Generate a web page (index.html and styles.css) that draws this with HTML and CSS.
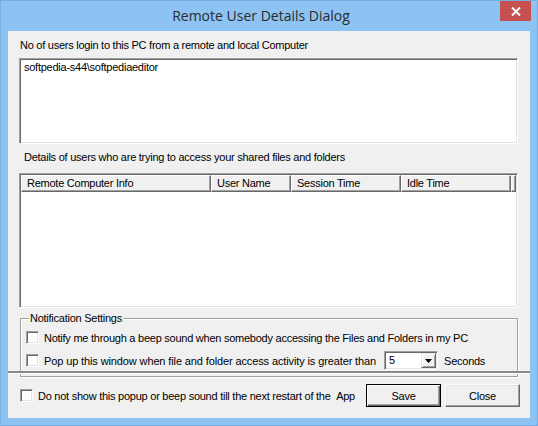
FILE: index.html
```html
<!DOCTYPE html>
<html>
<head>
<meta charset="utf-8">
<link rel="stylesheet" href="styles.css">
</head>
<body>
<div class="window">
  <div class="titlebar">
    <div></div>
    <div class="title">Remote User Details Dialog</div>
    <div class="tb-right">
      <div class="close-btn">
        <svg width="10" height="9" viewBox="0 0 10 9"><path d="M1 0.5 L9 8.5 M9 0.5 L1 8.5" stroke="#fff" stroke-width="2" fill="none"/></svg>
      </div>
    </div>
  </div>
  <div class="client">
    <div class="main">
      <div class="label l1">No of users login to this PC from a remote and local Computer</div>
      <div class="sunken textbox">
        <div class="tb-line">softpedia-s44\softpediaeditor</div>
      </div>
      <div class="label l2">Details of users who are trying to access your shared files and folders</div>
      <div class="sunken listview">
        <div class="lv-header">
          <div class="col c1">Remote Computer Info</div>
          <div class="col c2">User Name</div>
          <div class="col c3">Session Time</div>
          <div class="col c4">Idle Time</div>
          <div class="col c5"></div>
        </div>
      </div>
      <div class="group">
        <div class="legend">Notification Settings</div>
        <div class="opt">
          <span class="cb"></span>
          <span class="opt-text">Notify me through a beep sound when somebody accessing the Files and Folders in my PC</span>
        </div>
        <div class="opt">
          <span class="cb"></span>
          <span class="opt-text wide">Pop up this window when file and folder access activity is greater than</span>
          <div class="combo">
            <span class="combo-val">5</span>
            <span class="combo-btn"><svg width="7" height="4" viewBox="0 0 7 4"><path d="M0 0 H7 L3.5 4 Z" fill="#000"/></svg></span>
          </div>
          <span class="opt-text sec">Seconds</span>
        </div>
      </div>
    </div>
    <div class="footer">
      <span class="cb"></span>
      <span class="foot-text">Do not show this popup or beep sound till the next restart of the &nbsp;App</span>
      <div class="btn default">Save</div>
      <div class="btn">Close</div>
    </div>
  </div>
</div>
</body>
</html>
```
FILE: styles.css
```css
html, body {
  margin: 0;
  padding: 0;
}
body {
  width: 538px;
  height: 426px;
  overflow: hidden;
}
.window {
  width: 538px;
  height: 426px;
  box-sizing: border-box;
  background: #8cc3f3;
  box-shadow: inset 0 0 0 1px #78afe2;
  display: flex;
  flex-direction: column;
  font-family: "Liberation Sans", Arial, sans-serif;
  font-size: 11px;
  letter-spacing: -0.25px;
  color: #000;
}
.titlebar {
  height: 31px;
  display: grid;
  grid-template-columns: 1fr auto 1fr;
  flex: none;
}
.title {
  font-family: "Open Sans", "Noto Sans", sans-serif;
  font-size: 14px;
  letter-spacing: 0;
  color: #2b2b2b;
  line-height: 20px;
  padding-top: 6px;
  margin-right: 16px;
}
.tb-right {
  display: flex;
  justify-content: flex-end;
  align-items: flex-start;
  padding: 1px 7px 0 0;
}
.close-btn {
  width: 31px;
  height: 20px;
  background: #c75050;
  display: flex;
  align-items: center;
  justify-content: center;
}
.client {
  margin: 0 8px 8px 8px;
  flex: 1;
  background: #f0f0f0;
  display: flex;
  flex-direction: column;
}
.main {
  padding: 8px 12px 0 11px;
  height: 340px;
  box-sizing: border-box;
}
.label {
  line-height: 13px;
  white-space: nowrap;
}
.l1 { padding-left: 1px; }
.l2 { padding-left: 5px; margin-top: 7px; }
.sunken {
  background: #fff;
  border: 1px solid;
  border-color: #a0a0a0 #fff #fff #a0a0a0;
  box-shadow: inset 1px 1px 0 #696969, inset -1px -1px 0 #e3e3e3;
}
.textbox {
  margin-top: 6px;
  height: 86px;
  box-sizing: border-box;
  padding: 2px 4px;
}
.tb-line { line-height: 13px; }
.listview {
  margin-top: 9px;
  height: 135px;
  box-sizing: border-box;
  padding: 1px;
}
.lv-header {
  display: flex;
  height: 17px;
}
.col {
  box-sizing: border-box;
  background: #f0f0f0;
  border-left: 1px solid #fff;
  border-top: 1px solid #fff;
  border-right: 1px solid #696969;
  border-bottom: 1px solid #696969;
  box-shadow: inset -1px -1px 0 #a0a0a0;
  padding-left: 5px;
  line-height: 14px;
  white-space: nowrap;
}
.c1 { width: 190px; }
.c2 { width: 80px; }
.c3 { width: 110px; }
.c4 { width: 110px; }
.c5 { flex: 1; padding: 0; }
.group {
  margin: 10px 0 0 1px;
  border: 1px solid #a0a0a0;
  box-shadow: inset 1px 1px 0 #fff, 1px 1px 0 #fff;
  height: 59px;
  box-sizing: border-box;
  padding: 0 4px 0 5px;
  display: flex;
  flex-direction: column;
}
.legend {
  align-self: flex-start;
  margin: -7px 0 0 3px;
  padding: 0 1px;
  background: #f0f0f0;
  line-height: 13px;
}
.opt {
  display: flex;
  align-items: center;
  height: 19px;
  margin-top: 3px;
  white-space: nowrap;
}
.opt + .opt { margin-top: 4px; }
.cb {
  flex: none;
  width: 13px;
  height: 13px;
  box-sizing: border-box;
  background: #fff;
  border: 1px solid;
  border-color: #a0a0a0 #fff #fff #a0a0a0;
  box-shadow: inset 1px 1px 0 #696969, inset -1px -1px 0 #e3e3e3;
}
.opt-text { margin-left: 5px; }
.opt-text.wide { letter-spacing: -0.12px; }
.combo {
  flex: none;
  margin-left: 8px;
  width: 54px;
  height: 19px;
  box-sizing: border-box;
  background: #fff;
  border: 1px solid;
  border-color: #a0a0a0 #fff #fff #a0a0a0;
  box-shadow: inset 1px 1px 0 #696969, inset -1px -1px 0 #e3e3e3;
  display: flex;
  padding: 1px;
}
.combo-val {
  flex: 1;
  padding-left: 3px;
  line-height: 15px;
}
.combo-btn {
  width: 15px;
  box-sizing: border-box;
  background: #f0f0f0;
  border: 1px solid;
  border-color: #e3e3e3 #696969 #696969 #e3e3e3;
  box-shadow: inset 1px 1px 0 #fff, inset -1px -1px 0 #a0a0a0;
  display: flex;
  align-items: center;
  justify-content: center;
}
.sec { margin-left: 6px; }
.footer {
  flex: 1;
  border-top: 2px solid #8a8a8a;
  box-shadow: inset 0 1px 0 #fff;
  display: flex;
  align-items: center;
  padding: 0 10px 0 12px;
  white-space: nowrap;
}
.foot-text {
  margin-left: 5px;
  flex: 1;
}
.btn {
  flex: none;
  width: 75px;
  height: 23px;
  box-sizing: border-box;
  background: #f0f0f0;
  border: 1px solid;
  border-color: #fff #696969 #696969 #fff;
  box-shadow: inset -1px -1px 0 #a0a0a0, inset 1px 1px 0 #e3e3e3;
  display: flex;
  align-items: center;
  justify-content: center;
  margin-left: 4px;
}
.btn.default {
  border: 1px solid #000;
  box-shadow: inset 1px 1px 0 #fff, inset -1px -1px 0 #696969, inset -2px -2px 0 #a0a0a0;
}
```
